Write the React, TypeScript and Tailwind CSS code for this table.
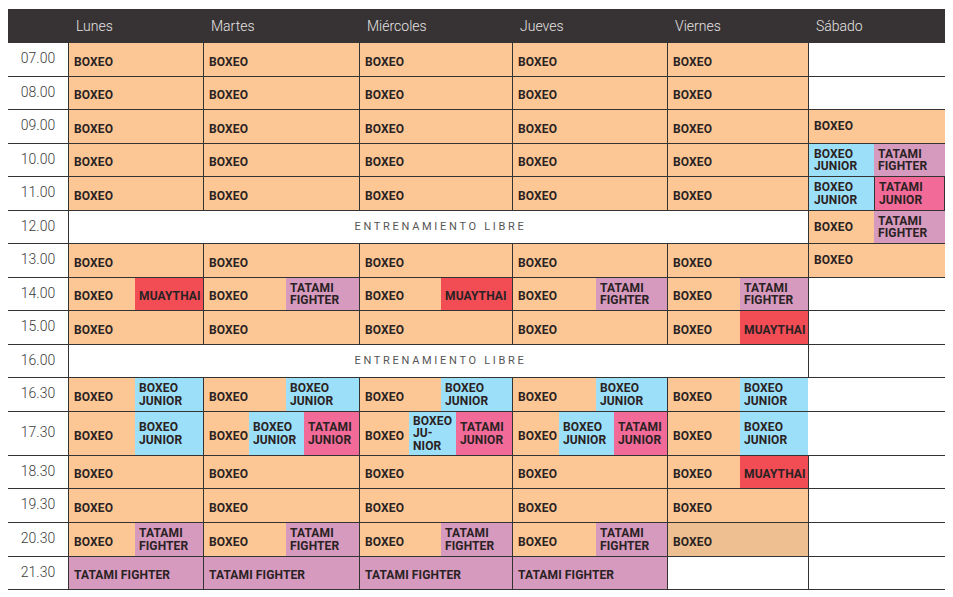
type Seg = { t: string; bg: string; w?: string; box?: boolean }
type Cell = Seg[] | null

type Row = {
  time: string
  h: string
  days?: Cell[]
  libre?: boolean
  sab?: Cell
  sabFlat?: boolean
}

const GRID = 'grid grid-cols-[60px_135px_156px_153px_155px_141px_137px]'

// colours
const O = 'bg-[#fcc795]'
const O2 = 'bg-[#eebf90]'
const B = 'bg-[#9cdff8]'
const TF = 'bg-[#d69abf]'
const TJ = 'bg-[#f26b98]'
const M = 'bg-[#f24c55]'

const boxeo: Cell = [{ t: 'BOXEO', bg: O }]
const fullRow: Cell[] = [boxeo, boxeo, boxeo, boxeo, boxeo]

const rows: Row[] = [
  { time: '07.00', h: 'h-[34px]', days: fullRow, sab: null },
  { time: '08.00', h: 'h-[33px]', days: fullRow, sab: null },
  { time: '09.00', h: 'h-[34px]', days: fullRow, sab: boxeo },
  {
    time: '10.00',
    h: 'h-[33px]',
    days: fullRow,
    sab: [
      { t: 'BOXEO\nJUNIOR', bg: B, w: 'w-[65px]' },
      { t: 'TATAMI\nFIGHTER', bg: TF },
    ],
  },
  {
    time: '11.00',
    h: 'h-[34px]',
    days: fullRow,
    sab: [
      { t: 'BOXEO\nJUNIOR', bg: B, w: 'w-[65px]' },
      { t: 'TATAMI\nJUNIOR', bg: TJ, box: true },
    ],
  },
  {
    time: '12.00',
    h: 'h-[33px]',
    libre: true,
    sab: [
      { t: 'BOXEO', bg: O, w: 'w-[65px]' },
      { t: 'TATAMI\nFIGHTER', bg: TF },
    ],
  },
  { time: '13.00', h: 'h-[34px]', days: fullRow, sab: boxeo },
  {
    time: '14.00',
    h: 'h-[33px]',
    days: [
      [{ t: 'BOXEO', bg: O, w: 'w-[66px]' }, { t: 'MUAYTHAI', bg: M }],
      [{ t: 'BOXEO', bg: O, w: 'w-[82px]' }, { t: 'TATAMI\nFIGHTER', bg: TF }],
      [{ t: 'BOXEO', bg: O, w: 'w-[81px]' }, { t: 'MUAYTHAI', bg: M }],
      [{ t: 'BOXEO', bg: O, w: 'w-[83px]' }, { t: 'TATAMI\nFIGHTER', bg: TF }],
      [{ t: 'BOXEO', bg: O, w: 'w-[72px]' }, { t: 'TATAMI\nFIGHTER', bg: TF }],
    ],
    sab: null,
  },
  {
    time: '15.00',
    h: 'h-[34px]',
    days: [boxeo, boxeo, boxeo, boxeo, [{ t: 'BOXEO', bg: O, w: 'w-[72px]' }, { t: 'MUAYTHAI', bg: M }]],
    sab: null,
  },
  { time: '16.00', h: 'h-[33px]', libre: true, sab: null },
  {
    time: '16.30',
    h: 'h-[34px]',
    days: [
      [{ t: 'BOXEO', bg: O, w: 'w-[66px]' }, { t: 'BOXEO\nJUNIOR', bg: B }],
      [{ t: 'BOXEO', bg: O, w: 'w-[82px]' }, { t: 'BOXEO\nJUNIOR', bg: B }],
      [{ t: 'BOXEO', bg: O, w: 'w-[81px]' }, { t: 'BOXEO\nJUNIOR', bg: B }],
      [{ t: 'BOXEO', bg: O, w: 'w-[83px]' }, { t: 'BOXEO\nJUNIOR', bg: B }],
      [{ t: 'BOXEO', bg: O, w: 'w-[72px]' }, { t: 'BOXEO\nJUNIOR', bg: B }],
    ],
    sab: null,
    sabFlat: true,
  },
  {
    time: '17.30',
    h: 'h-[44px]',
    days: [
      [{ t: 'BOXEO', bg: O, w: 'w-[66px]' }, { t: 'BOXEO\nJUNIOR', bg: B }],
      [
        { t: 'BOXEO', bg: O, w: 'w-[45px]' },
        { t: 'BOXEO\nJUNIOR', bg: B, w: 'w-[55px]' },
        { t: 'TATAMI\nJUNIOR', bg: TJ },
      ],
      [
        { t: 'BOXEO', bg: O, w: 'w-[49px]' },
        { t: 'BOXEO\nJU-\nNIOR', bg: B, w: 'w-[47px]' },
        { t: 'TATAMI\nJUNIOR', bg: TJ },
      ],
      [
        { t: 'BOXEO', bg: O, w: 'w-[46px]' },
        { t: 'BOXEO\nJUNIOR', bg: B, w: 'w-[55px]' },
        { t: 'TATAMI\nJUNIOR', bg: TJ },
      ],
      [{ t: 'BOXEO', bg: O, w: 'w-[72px]' }, { t: 'BOXEO\nJUNIOR', bg: B }],
    ],
    sab: null,
    sabFlat: true,
  },
  {
    time: '18.30',
    h: 'h-[33px]',
    days: [boxeo, boxeo, boxeo, boxeo, [{ t: 'BOXEO', bg: O, w: 'w-[72px]' }, { t: 'MUAYTHAI', bg: M }]],
    sab: null,
  },
  { time: '19.30', h: 'h-[34px]', days: fullRow, sab: null },
  {
    time: '20.30',
    h: 'h-[34px]',
    days: [
      [{ t: 'BOXEO', bg: O, w: 'w-[66px]' }, { t: 'TATAMI\nFIGHTER', bg: TF }],
      [{ t: 'BOXEO', bg: O, w: 'w-[82px]' }, { t: 'TATAMI\nFIGHTER', bg: TF }],
      [{ t: 'BOXEO', bg: O, w: 'w-[81px]' }, { t: 'TATAMI\nFIGHTER', bg: TF }],
      [{ t: 'BOXEO', bg: O, w: 'w-[83px]' }, { t: 'TATAMI\nFIGHTER', bg: TF }],
      [{ t: 'BOXEO', bg: O2 }],
    ],
    sab: null,
  },
  {
    time: '21.30',
    h: 'h-[33px]',
    days: [
      [{ t: 'TATAMI FIGHTER', bg: TF }],
      [{ t: 'TATAMI FIGHTER', bg: TF }],
      [{ t: 'TATAMI FIGHTER', bg: TF }],
      [{ t: 'TATAMI FIGHTER', bg: TF }],
      null,
    ],
    sab: null,
  },
]

const DAYS = ['Lunes', 'Martes', 'Miércoles', 'Jueves', 'Viernes', 'Sábado']

function Label({ text, lift }: { text: string; lift: boolean }) {
  const lines = text.split('\n')
  const single = lines.length === 1
  return (
    <span
      className={`whitespace-nowrap text-[12px] font-bold leading-[12.5px] tracking-[0.01em] text-[#2a2223] ${
        single && lift ? 'pt-[5px]' : ''
      }`}
    >
      {lines.map((l, i) => (
        <span key={i} className="block">
          {l}
        </span>
      ))}
    </span>
  )
}

function DayCell({ cell, sat, flat }: { cell: Cell; sat?: boolean; flat?: boolean }) {
  return (
    <div className={`flex h-full ${flat ? '' : 'border-l border-[#333]'}`}>
      {cell?.map((s, i) => (
        <div
          key={i}
          className={`flex h-full items-center overflow-hidden ${s.w ?? 'flex-1'} ${s.bg} ${
            i === 0 ? 'pl-[5px]' : 'pl-[4px]'
          } ${s.box ? 'border-x border-[#333]' : ''}`}
        >
          <Label text={s.t} lift={!sat} />
        </div>
      ))}
    </div>
  )
}

export default function App() {
  return (
    <div className="min-h-screen bg-white pt-[9px] pl-[8px] font-[Roboto,sans-serif]">
      <div className="w-[937px]">
        {/* Header */}
        <div className={`${GRID} h-[34px] bg-[#373334]`}>
          <div />
          {DAYS.map((d) => (
            <div key={d} className="flex items-center pl-[8px] text-[14px] font-light text-[#e6e3e3]">
              {d}
            </div>
          ))}
        </div>

        {rows.map((r) => (
          <div key={r.time} className={`${GRID} ${r.h} border-b border-[#333]`}>
            <div className="flex items-center justify-center pb-[2px] text-[14px] font-light text-[#3c3c3c]">
              {r.time}
            </div>
            {r.libre ? (
              <div className="col-span-5 flex items-center justify-center border-l border-[#333] bg-white pl-[4px] text-[11px] tracking-[2.7px] text-[#555]">
                ENTRENAMIENTO LIBRE
              </div>
            ) : (
              r.days!.map((c, i) => <DayCell key={i} cell={c} />)
            )}
            <DayCell cell={r.sab ?? null} sat flat={r.sabFlat} />
          </div>
        ))}
      </div>
    </div>
  )
}
